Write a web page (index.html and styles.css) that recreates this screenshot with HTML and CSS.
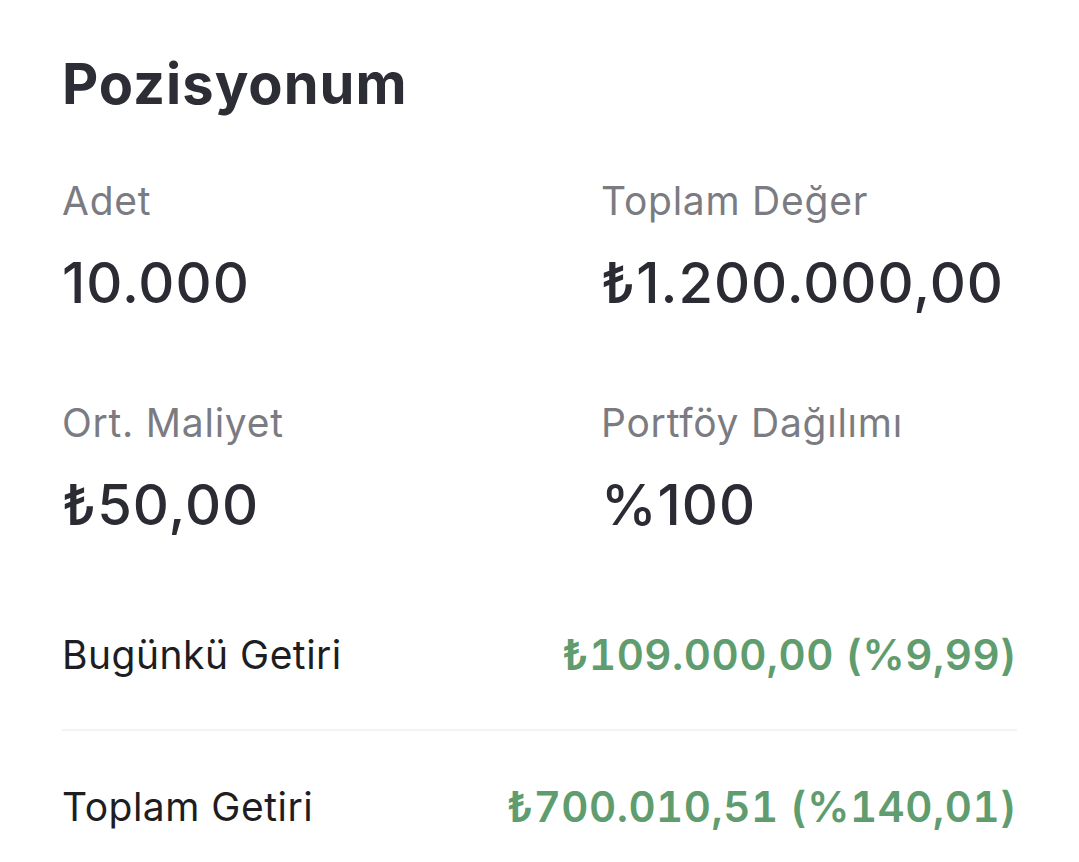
FILE: index.html
```html
<!DOCTYPE html>
<html>
    <head>
        <meta charset="utf-8">
        <link rel="stylesheet" href="styles.css">
    </head>
    <body>
        <div class="position">
            <h1>Pozisyonum</h1>
            <div class="stats">
                <div class="stat">
                    <div class="label">Adet</div>
                    <div class="value">10.000</div>
                </div>
                <div class="stat">
                    <div class="label">Toplam Değer</div>
                    <div class="value">₺1.200.000,00</div>
                </div>
                <div class="stat">
                    <div class="label">Ort. Maliyet</div>
                    <div class="value">₺50,00</div>
                </div>
                <div class="stat">
                    <div class="label">Portföy Dağılımı</div>
                    <div class="value">%100</div>
                </div>
            </div>
            <div class="returns">
                <div class="row">
                    <span class="name">Bugünkü Getiri</span>
                    <span class="gain">₺109.000,00 (%9,99)</span>
                </div>
                <div class="row">
                    <span class="name">Toplam Getiri</span>
                    <span class="gain">₺700.010,51 (%140,01)</span>
                </div>
            </div>
        </div>
    </body>
</html>
```

FILE: styles.css
```css
body{
    margin:0;
    background:#fff;
    font-family:Inter, "Noto Sans", sans-serif;
}
.position{
    padding:52px 62px 0 62px;
}
h1{
    margin:0;
    font-size:56px;
    line-height:64px;
    font-weight:700;
    color:#2c2d35;
    letter-spacing:1px;
}
.stats{
    display:grid;
    grid-template-columns:539px 1fr;
    row-gap:84px;
    margin-top:61px;
}
.label{
    font-size:39px;
    line-height:48px;
    color:#7b7b82;
    letter-spacing:0.75px;
}
.value{
    margin-top:26px;
    font-size:56px;
    line-height:64px;
    font-weight:500;
    color:#2a2b33;
    letter-spacing:1px;
}
.returns{
    margin-top:87px;
}
.row{
    display:flex;
    justify-content:space-between;
    align-items:center;
    height:150px;
    border-bottom:2px solid #f3f3f4;
}
.row:first-child{
    margin-top:-45px;
}
.row:last-child{
    border-bottom:none;
}
.name{
    font-size:39px;
    color:#1d1d22;
    letter-spacing:0.5px;
}
.gain{
    font-size:42px;
    font-weight:600;
    color:#5f9c6e;
    letter-spacing:0.5px;
    font-feature-settings:"tnum";
}
```
